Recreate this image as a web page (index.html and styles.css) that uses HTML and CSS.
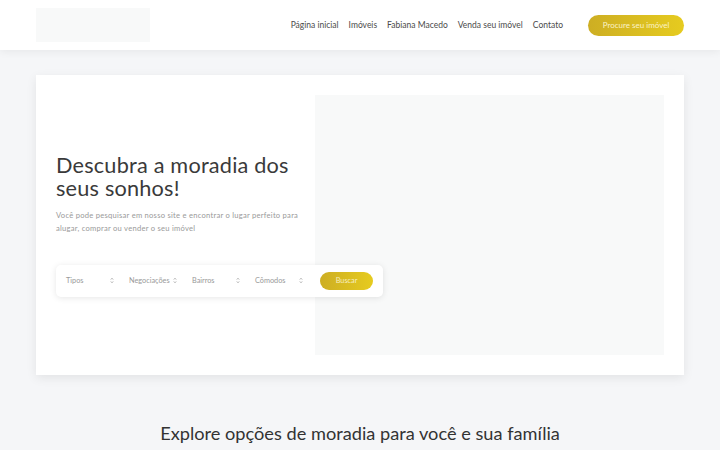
FILE: index.html
```html
<!DOCTYPE html>
<html lang="pt-BR">
<head>
    <meta charset="UTF-8">
    <meta name="viewport" content="width=device-width, initial-scale=1.0">
    <title>Fabiana Macedo Imóveis</title>
    <link rel="stylesheet" href="styles.css">
</head>
<body>
    <header class="topbar">
        <div class="logo"></div>
        <nav class="menu">
            <a href="#">Página inicial</a>
            <a href="#">Imóveis</a>
            <a href="#">Fabiana Macedo</a>
            <a href="#">Venda seu imóvel</a>
            <a href="#">Contato</a>
        </nav>
        <a href="#" class="cta">Procure seu imóvel</a>
    </header>

    <section class="hero">
        <div class="hero-text">
            <h1>Descubra a moradia dos seus sonhos!</h1>
            <p>Você pode pesquisar em nosso site e encontrar o lugar perfeito para alugar, comprar ou vender o seu imóvel</p>
            <form class="search">
                <div class="field">Tipos <svg class="arrows" viewBox="0 0 4 7"><path d="M0.8 2.6 2 1.2 3.2 2.6M0.8 4.4 2 5.8 3.2 4.4"/></svg></div>
                <div class="field">Negociações <svg class="arrows" viewBox="0 0 4 7"><path d="M0.8 2.6 2 1.2 3.2 2.6M0.8 4.4 2 5.8 3.2 4.4"/></svg></div>
                <div class="field">Bairros <svg class="arrows" viewBox="0 0 4 7"><path d="M0.8 2.6 2 1.2 3.2 2.6M0.8 4.4 2 5.8 3.2 4.4"/></svg></div>
                <div class="field">Cômodos <svg class="arrows" viewBox="0 0 4 7"><path d="M0.8 2.6 2 1.2 3.2 2.6M0.8 4.4 2 5.8 3.2 4.4"/></svg></div>
                <button type="button" class="buscar">Buscar</button>
            </form>
        </div>
        <div class="hero-image"></div>
    </section>

    <h2 class="explore">Explore opções de moradia para você e sua família</h2>
</body>
</html>
```

FILE: styles.css
```css
body {
    font-family: Lato, "Noto Sans", sans-serif;
    background-color: #f5f6f8;
    color: #3a3a3a;
    margin: 0;
    padding: 0;
}
.topbar {
    display: flex;
    align-items: center;
    height: 50px;
    padding: 0 36px;
    background-color: #fff;
    box-shadow: 0 2px 8px rgba(0, 0, 0, 0.06);
}
.logo {
    width: 114px;
    height: 34px;
    background-color: #f8f9f9;
}
.menu {
    display: flex;
    gap: 10px;
    margin-left: auto;
}
.menu a {
    color: #4a4a4a;
    font-size: 8.5px;
    text-decoration: none;
}
.cta {
    margin-left: 25px;
    width: 96px;
    height: 21px;
    line-height: 21px;
    border-radius: 11px;
    background: linear-gradient(90deg, #cdae23, #e6cb1f);
    color: #fbf3c8;
    font-size: 8px;
    text-align: center;
    text-decoration: none;
}
.hero {
    display: grid;
    grid-template-columns: 259px 349px;
    margin: 25px 36px 0;
    padding: 20px;
    height: 260px;
    background-color: #fff;
    box-shadow: 0 3px 10px rgba(0, 0, 0, 0.08);
}
.hero-text {
    align-self: center;
    position: relative;
    z-index: 1;
}
.hero h1 {
    margin: 0;
    font-size: 21.7px;
    font-weight: 400;
    line-height: 23px;
    letter-spacing: 0.2px;
}
.hero p {
    max-width: 252px;
    margin: 9px 0 0;
    font-size: 7.6px;
    line-height: 13px;
    letter-spacing: 0.25px;
    color: #9a9a9a;
}
.search {
    display: flex;
    align-items: center;
    width: 327px;
    height: 32px;
    margin-top: 30px;
    padding: 0 10px;
    box-sizing: border-box;
    background-color: #fff;
    border-radius: 5px;
    box-shadow: 0 1px 6px rgba(0, 0, 0, 0.1);
}
.field {
    display: grid;
    grid-template-columns: 44px 5px;
    align-items: center;
    flex-shrink: 0;
    width: 63px;
    white-space: nowrap;
    font-size: 7.3px;
    color: #999;
}
.arrows {
    width: 4px;
    height: 7px;
    fill: none;
    stroke: #888;
    stroke-width: 0.6;
}
.buscar {
    margin-left: auto;
    width: 53px;
    height: 18px;
    border: none;
    border-radius: 9px;
    background: linear-gradient(90deg, #cdae23, #e6cb1f);
    color: #f7eec0;
    font-family: inherit;
    font-size: 7.3px;
}
.hero-image {
    background-color: #f8f9f9;
}
.explore {
    margin: 47px 0 0;
    text-align: center;
    font-size: 18.2px;
    font-weight: 400;
    color: #333;
}
```
